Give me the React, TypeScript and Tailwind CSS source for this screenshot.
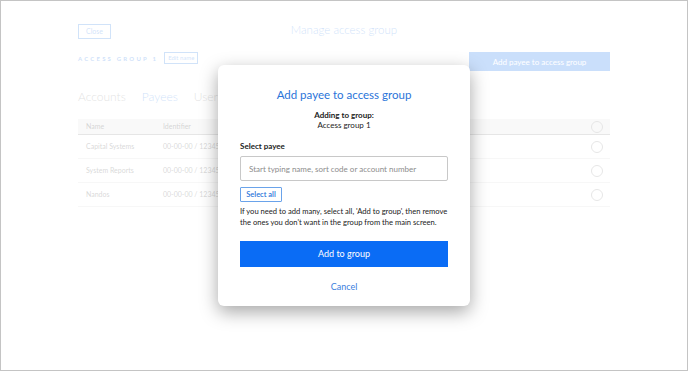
import { useState } from 'react'

const rows = [
  { name: 'Capital Systems', id: '00-00-00 / 12345678' },
  { name: 'System Reports', id: '00-00-00 / 12345678' },
  { name: 'Nandos', id: '00-00-00 / 12345678' },
]

function Radio() {
  return <span className="block w-[12px] h-[12px] rounded-full border border-[#9a9a9a]" />
}

/**
 * Manage access group page, shown behind the modal
 */
function ManagePage() {
  return (
    <div className="w-[532px] mx-auto pt-[23px]">
      <div className="relative h-[15px] flex items-center">
        <button className="h-[15px] w-[33px] border border-[#4a8ee8] text-[7px] text-[#4a8ee8]">Close</button>
        <h1 className="absolute left-1/2 -translate-x-1/2 top-[-2px] text-[11.5px] leading-[16px] font-light text-[#3d86e6] whitespace-nowrap">
          Manage access group
        </h1>
      </div>
      <div className="mt-[13px] flex items-start justify-between">
        <div className="flex items-center gap-[6px] h-[12px]">
          <span className="text-[6px] font-bold tracking-[2.2px] text-[#3d86e6]">ACCESS GROUP 1</span>
          <span className="h-[12px] px-[3px] border border-[#4a8ee8] text-[6px] leading-[10px] text-[#4a8ee8]">Edit name</span>
        </div>
        <button className="h-[19px] w-[141px] bg-[#2f7ff0] text-white text-[8px]">Add payee to access group</button>
      </div>
      <div className="mt-[18px] flex gap-[16px] text-[12px] leading-[16px] font-light text-[#8a8a8a]">
        <span>Accounts</span>
        <span className="text-[#3d86e6]">Payees</span>
        <span>Users</span>
      </div>
      <div className="mt-[14px]">
        <div className="h-[16px] flex items-center bg-[#e8e8e8] border-b border-[#9a9a9a] text-[7px] text-[#555] pl-[8px] pr-[7px]">
          <span className="w-[77px]">Name</span>
          <span className="flex-1">Identifier</span>
          <Radio />
        </div>
        {rows.map((r) => (
          <div key={r.name} className="h-[24px] flex items-center border-b border-[#e0e0e0] text-[7px] text-[#666] pl-[8px] pr-[7px]">
            <span className="w-[77px]">{r.name}</span>
            <span className="flex-1">{r.id}</span>
            <Radio />
          </div>
        ))}
      </div>
    </div>
  )
}

/**
 * Modal: add payee to access group
 */
function AddPayeeModal() {
  const [query, setQuery] = useState('')
  return (
    <div className="w-[252px] h-[241px] bg-white rounded-[6px] shadow-[0_6px_18px_rgba(0,0,0,0.35)] px-[22px] pt-[22px] flex flex-col">
      <h2 className="text-center text-[11.5px] leading-[15px] text-[#2a74d9]">Add payee to access group</h2>
      <div className="mt-[9px] text-center text-[8px] leading-[9.5px] text-[#222]">
        <div className="font-bold">Adding to group:</div>
        <div>Access group 1</div>
      </div>
      <div className="mt-[11px] text-[8px] leading-[10px] font-bold text-[#222]">Select payee</div>
      <input
        value={query}
        onChange={(e) => setQuery(e.target.value)}
        placeholder="Start typing name, sort code or account number"
        className="mt-[5px] h-[25px] w-full border border-[#c8c8c8] rounded-[2px] px-[8px] text-[8px] text-[#333] placeholder:text-[#8c8c8c] outline-none"
      />
      <button className="mt-[6px] self-start h-[15px] w-[42px] border border-[#6aa3ea] rounded-[1px] text-[7.5px] font-semibold text-[#2a74d9]">
        Select all
      </button>
      <p className="mt-[4px] text-[7.6px] leading-[11px] text-[#222]">
        If you need to add many, select all, 'Add to group', then remove the ones you don't want in the group from the main screen.
      </p>
      <button className="mt-[13px] h-[26px] w-full bg-[#0a6cf5] text-white text-[9px]">Add to group</button>
      <button className="mt-[14px] self-center text-[9px] leading-[12px] text-[#3a80de]">Cancel</button>
    </div>
  )
}

export default function App() {
  return (
    <div
      className="relative w-[688px] h-[371px] bg-white border border-[#c4c4c4] overflow-hidden"
      style={{ fontFamily: 'Lato, "Open Sans", sans-serif' }}
    >
      <ManagePage />
      <div className="absolute inset-0 bg-white/75" />
      <div className="absolute inset-0 flex items-center justify-center">
        <AddPayeeModal />
      </div>
    </div>
  )
}
